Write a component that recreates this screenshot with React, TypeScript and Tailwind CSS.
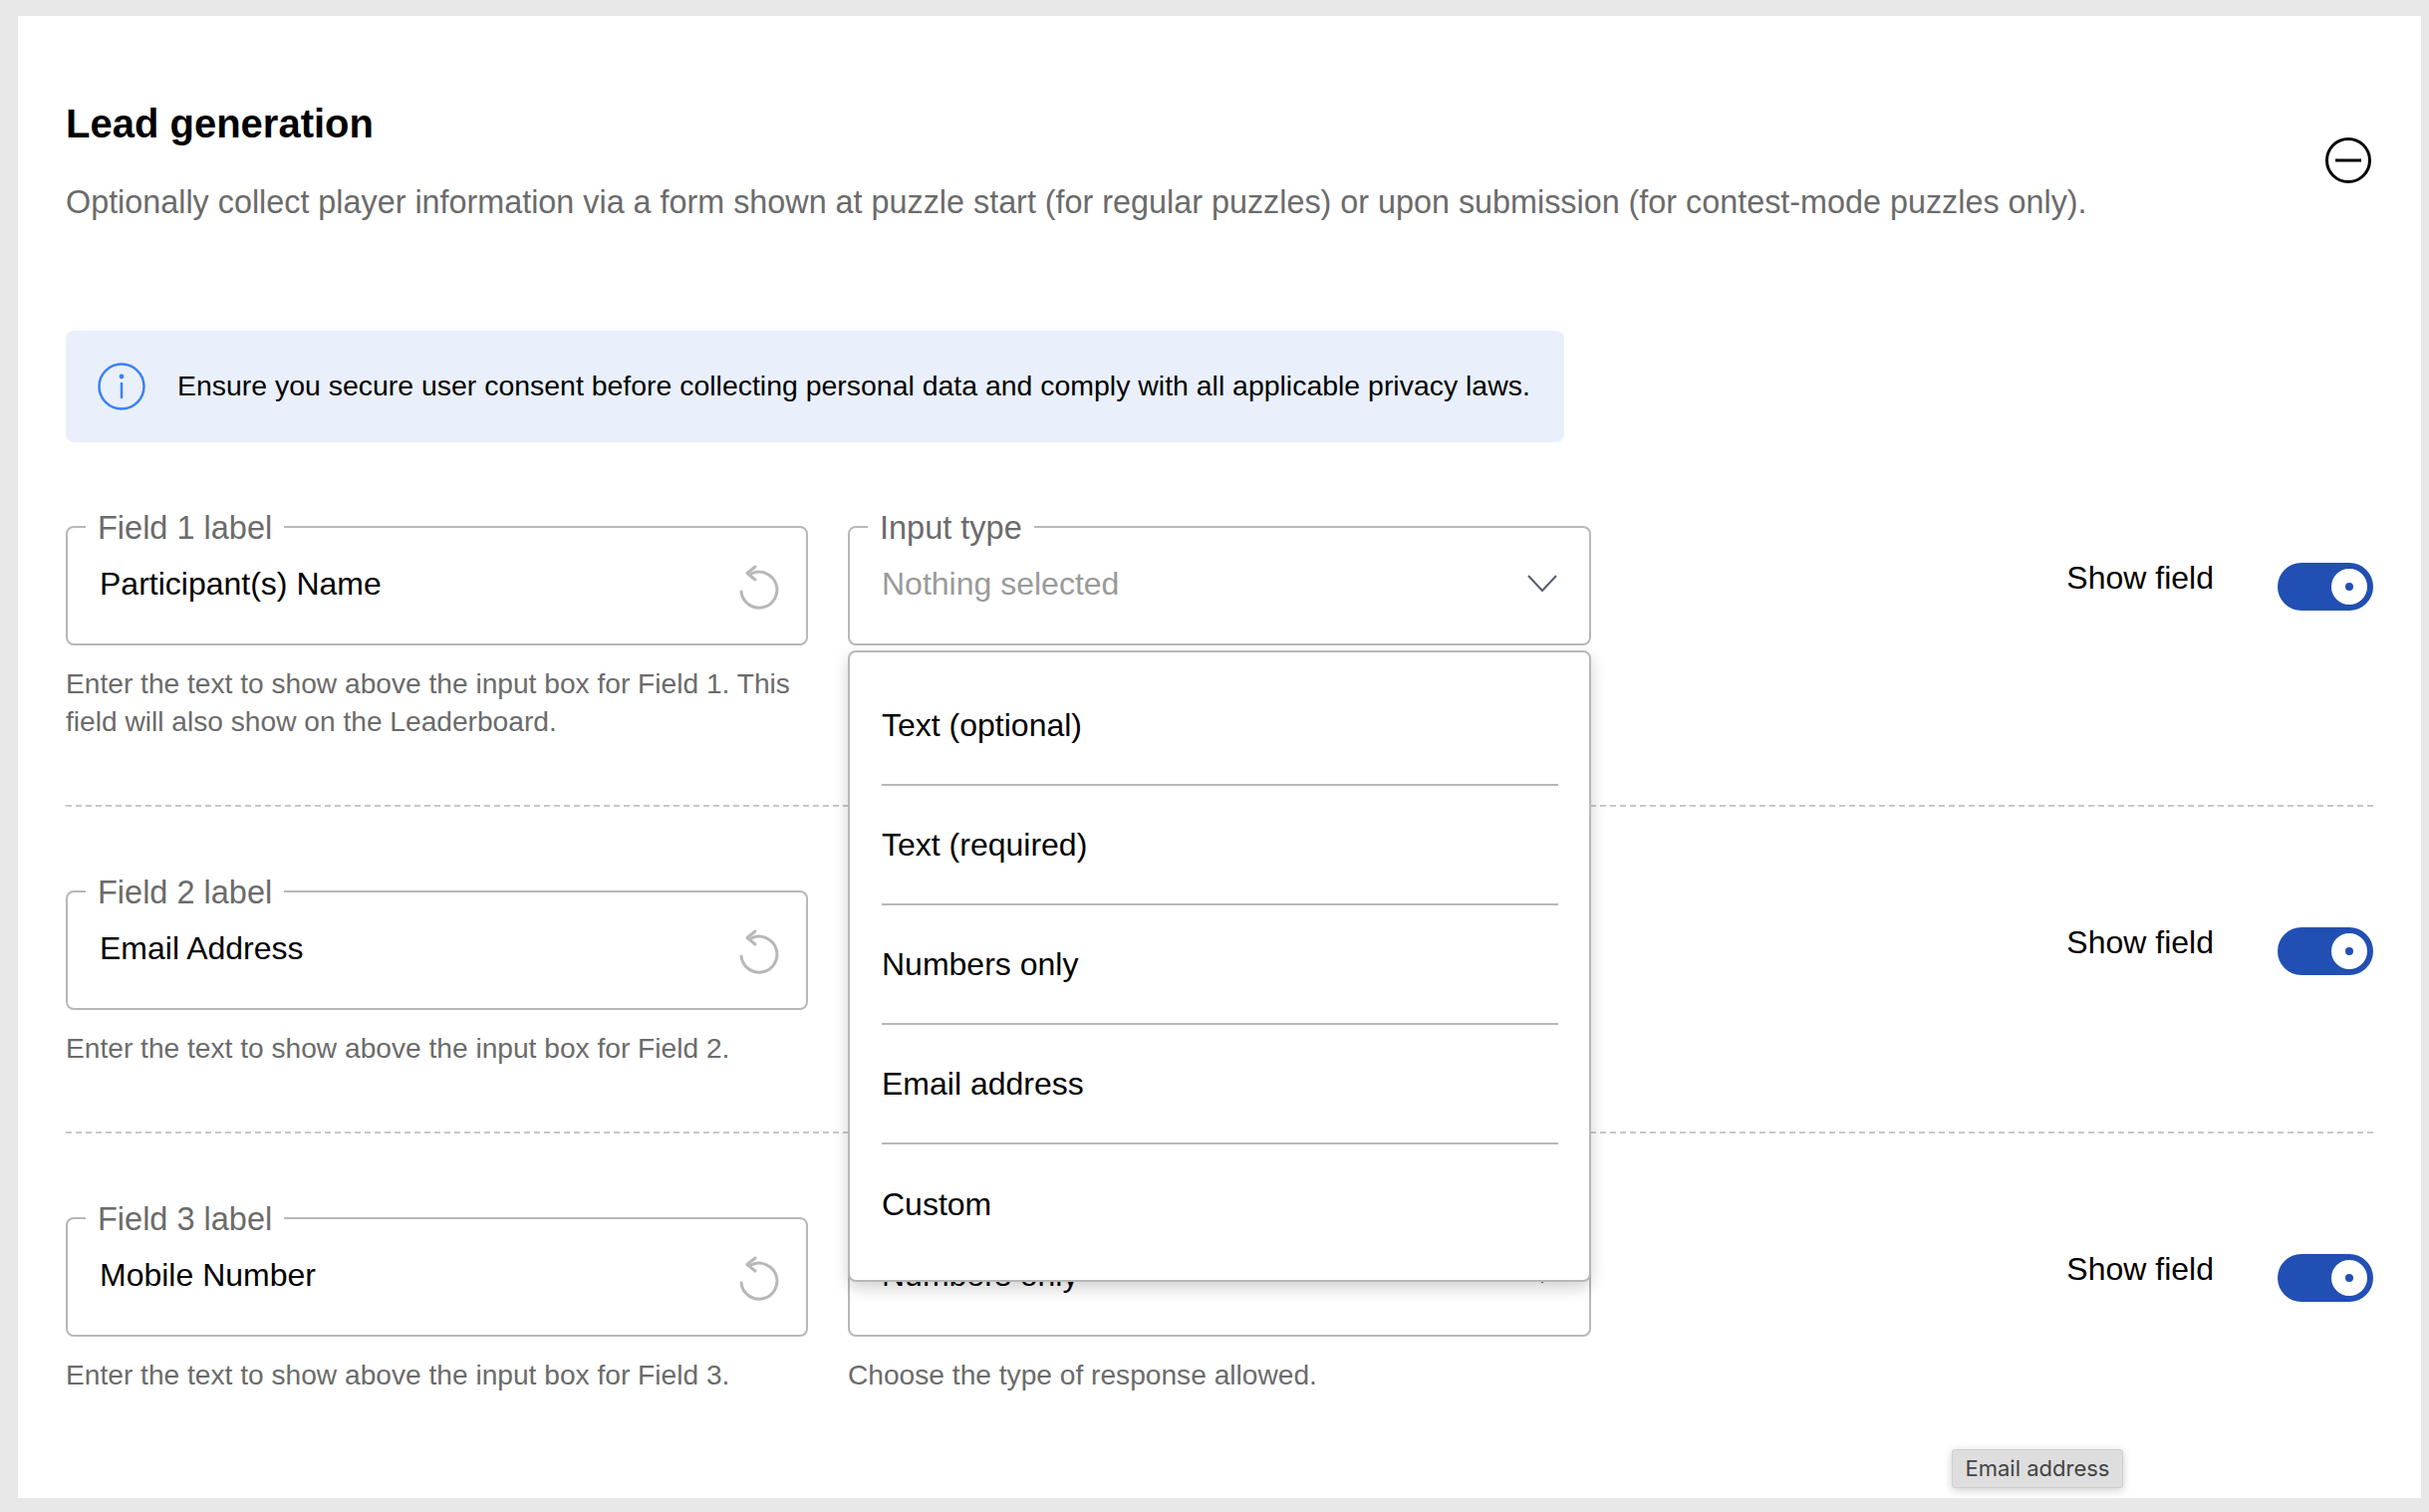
import React from "react";

const fields = [
  {
    label: "Field 1 label",
    value: "Participant(s) Name",
    help: "Enter the text to show above the input box for Field 1. This field will also show on the Leaderboard.",
    type: "Nothing selected",
    typeHelp: "",
    empty: true,
    rowClass: "flex pb-[64px] pt-[67px] border-b-2 border-dashed border-[#c8c8c8]",
  },
  {
    label: "Field 2 label",
    value: "Email Address",
    help: "Enter the text to show above the input box for Field 2.",
    type: "",
    typeHelp: "",
    empty: false,
    rowClass: "flex pb-[64px] pt-[67px] border-b-2 border-dashed border-[#c8c8c8]",
  },
  {
    label: "Field 3 label",
    value: "Mobile Number",
    help: "Enter the text to show above the input box for Field 3.",
    type: "Numbers only",
    typeHelp: "Choose the type of response allowed.",
    empty: false,
    rowClass: "flex pt-[67px]",
  },
];

const options = ["Text (optional)", "Text (required)", "Numbers only", "Email address", "Custom"];

const ResetIcon = () => (
  <svg width="44" height="48" viewBox="0 0 44 48" fill="none" stroke="#b8b8b8" strokeWidth="3" strokeLinecap="round" strokeLinejoin="round" className="shrink-0">
    <path d="M16 10 A18 18 0 1 1 6 28" />
    <path d="M20 3 L12 9.5 L20 16" />
  </svg>
);

const Chevron = () => (
  <svg width="30" height="18" viewBox="0 0 30 18" fill="none" stroke="#565e6c" strokeWidth="2" className="shrink-0">
    <path d="M1 1 L15 16 L29 1" />
  </svg>
);

const Toggle = () => (
  <div className="flex h-[48px] w-[96px] items-center justify-end rounded-full bg-[#224fb3] pr-[6px]">
    <div className="flex h-[36px] w-[36px] items-center justify-center rounded-full bg-white">
      <div className="h-[8px] w-[8px] rounded-full bg-[#224fb3]" />
    </div>
  </div>
);

const Outlined = ({ label, children }: { label: string; children: React.ReactNode }) => (
  <fieldset className="h-[137px] rounded-[8px] border-2 border-[#b8b8b8] p-0">
    <legend className="ml-[18px] h-[36px] px-3 text-[32.5px] leading-[39px] text-[#6b6b6b]">{label}</legend>
    <div className="flex items-start justify-between pl-[32px] pr-[32px] pt-[20px]">{children}</div>
  </fieldset>
);

const FieldRow = ({ field }: { field: (typeof fields)[number] }) => (
  <div className={field.rowClass}>
    <div className="w-[745px] shrink-0">
      <Outlined label={field.label}>
        <span className="text-[32px] leading-[38px] text-black">{field.value}</span>
        <span className="-mr-[5px] -mt-[1px]">
          <ResetIcon />
        </span>
      </Outlined>
      <p className="mt-[20px] text-[28.15px] leading-[38px] text-[#6b6b6b]">{field.help}</p>
    </div>
    <div className="ml-[40px] w-[746px] shrink-0">
      <Outlined label="Input type">
        <span className={field.empty ? "text-[32px] leading-[38px] text-[#9a9a9a]" : "text-[32px] leading-[38px] text-black"}>
          {field.type}
        </span>
        <span className="mt-[10px]">
          <Chevron />
        </span>
      </Outlined>
      <p className="mt-[20px] text-[28.15px] leading-[38px] text-[#6b6b6b]">{field.typeHelp}</p>
    </div>
    <div className="ml-auto flex items-start pt-[54px]">
      <span className="mr-[64px] -mt-[4px] text-[32px] leading-[38px] text-black">Show field</span>
      <Toggle />
    </div>
  </div>
);

export default function App() {
  return (
    <div className="h-[1518px] w-[2438px] overflow-hidden bg-[#e8e8e8] pl-[18px] pt-[16px] font-['Liberation_Sans',sans-serif]">
      <div className="relative h-[1488px] w-[2412px] bg-white pl-[48px] pr-[48px] pt-[84px]">
        <div className="flex items-center justify-between">
          <div>
            <h2 className="text-[40px] font-bold leading-[48px] text-black">Lead generation</h2>
            <p className="mt-[33px] text-[32.35px] leading-[44px] text-[#6b6b6b]">
              Optionally collect player information via a form shown at puzzle start (for regular puzzles) or upon submission (for contest-mode puzzles only).
            </p>
          </div>
          <svg width="46" height="46" viewBox="0 0 46 46" fill="none" stroke="#000" strokeWidth="3" className="mr-[2px] -mt-[4px] shrink-0">
            <circle cx="23" cy="23" r="21.5" />
            <path d="M10 23 H36" />
          </svg>
        </div>

        <div className="mt-[107px] flex h-[112px] w-[1504px] items-center rounded-[8px] bg-[#e9f0fb] pl-[32px]">
          <svg width="48" height="48" viewBox="0 0 48 48" fill="none" stroke="#3b82f6" strokeWidth="2.5" className="shrink-0">
            <circle cx="24" cy="24" r="22.5" />
            <path d="M24 21 V35" strokeLinecap="round" />
            <circle cx="24" cy="14" r="1.2" fill="#3b82f6" />
          </svg>
          <span className="-mt-[2px] ml-[32px] whitespace-nowrap text-[28.45px] leading-[38px] text-black">
            Ensure you secure user consent before collecting personal data and comply with all applicable privacy laws.
          </span>
        </div>

        <div className="w-full">
          {fields.map((field) => (
            <FieldRow key={field.label} field={field} />
          ))}
        </div>

        <div className="absolute left-[833px] top-[637px] h-[634px] w-[746px] rounded-[8px] border-2 border-[#b8b8b8] bg-white pt-[14px] shadow-[0_6px_16px_rgba(0,0,0,0.18)]">
          {options.map((option, i) => (
            <div
              key={option}
              className={
                i === options.length - 1
                  ? "ml-[32px] mr-[31px] flex h-[120px] items-center text-[32px] text-black"
                  : "ml-[32px] mr-[31px] flex h-[120px] items-center border-b-2 border-[#b8b8b8] text-[32px] text-black"
              }
            >
              {option}
            </div>
          ))}
        </div>

        <div className="absolute left-[1941px] top-[1439px] flex h-[39px] w-[172px] items-center justify-center rounded-[3px] border border-[#cfcfcf] bg-[#dedede] font-['Inter',sans-serif] text-[22px] text-[#444444] shadow-[0_2px_10px_rgba(0,0,0,0.2)]">
          Email address
        </div>
      </div>
    </div>
  );
}
